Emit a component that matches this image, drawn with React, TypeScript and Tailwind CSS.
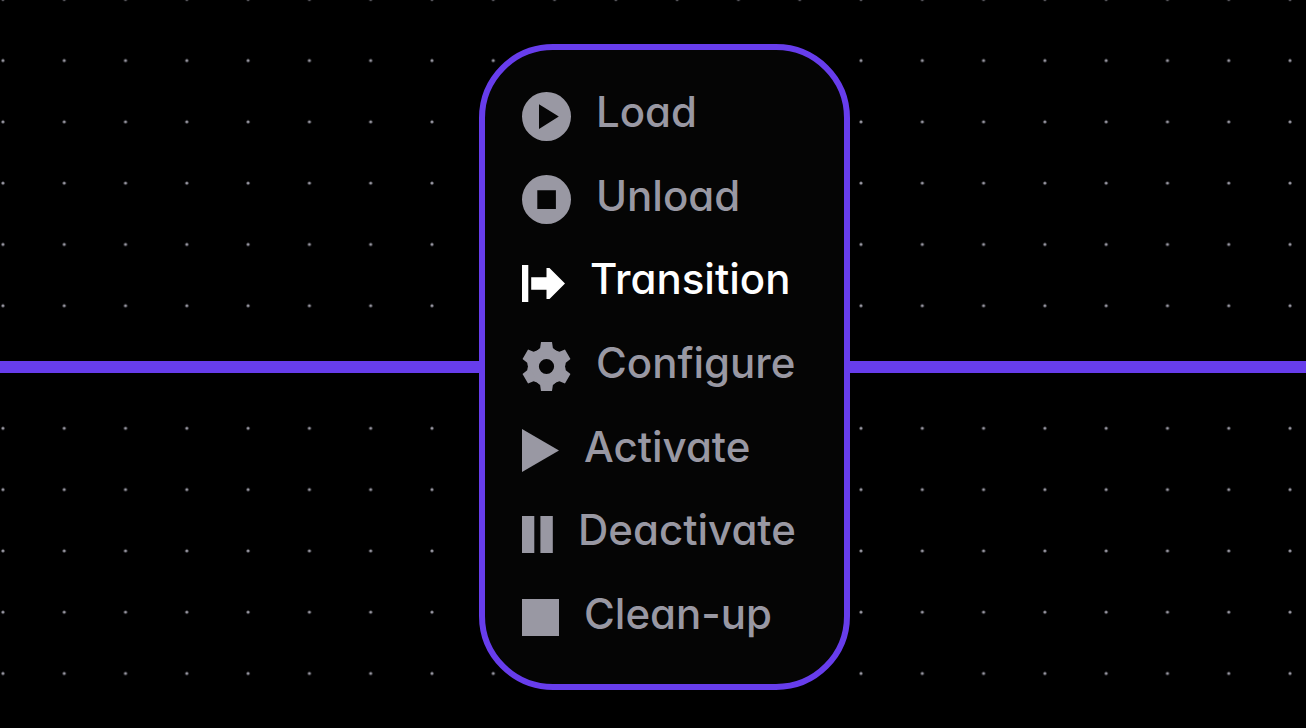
import React from "react";

function LoadIcon() {
  return (
    <svg className="h-[49px] w-[49px] shrink-0" viewBox="0 0 49 49" fill="currentColor" aria-hidden="true">
      <path fillRule="evenodd" d="M24.5 0a24.5 24.5 0 1 1 0 49a24.5 24.5 0 0 1 0-49ZM17 12.3V36.9L36.8 24.6Z" />
    </svg>
  );
}

function UnloadIcon() {
  return (
    <svg className="h-[49px] w-[49px] shrink-0" viewBox="0 0 49 49" fill="currentColor" aria-hidden="true">
      <path fillRule="evenodd" d="M24.5 0a24.5 24.5 0 1 1 0 49a24.5 24.5 0 0 1 0-49ZM15.3 15.3V33.9H33.9V15.3Z" />
    </svg>
  );
}

function TransitionIcon() {
  return (
    <svg className="h-[37px] w-[43px] shrink-0" viewBox="0 0 43 37" fill="currentColor" aria-hidden="true">
      <path d="M0 0H6.3V37H0ZM9.2 12.3H24.5V3.1H27.5L43 18.5L27.5 33.9H24.5V24.7H9.2Z" />
    </svg>
  );
}

const TOOTH_ANGLES = [0, 60, 120, 180, 240, 300];

function ConfigureIcon() {
  return (
    <svg className="h-[49px] w-[49px] shrink-0" viewBox="-24.5 -24.5 49 49" fill="currentColor" aria-hidden="true">
      <circle r="13" fill="none" stroke="currentColor" strokeWidth="10.8" />
      {TOOTH_ANGLES.map((angle) => (
        <path
          key={angle}
          transform={`rotate(${angle})`}
          d="M-5.5 -24.5H5.5L6.4 -18.6Q8 -17.4 10 -15.3H-10Q-8 -17.4 -6.4 -18.6Z"
        />
      ))}
    </svg>
  );
}

function ActivateIcon() {
  return (
    <svg className="h-[43px] w-[37px] shrink-0" viewBox="0 0 37 43" fill="currentColor" aria-hidden="true">
      <path d="M0 0L37 21.5L0 43Z" />
    </svg>
  );
}

function DeactivateIcon() {
  return (
    <svg className="h-[37px] w-[31px] shrink-0" viewBox="0 0 31 37" fill="currentColor" aria-hidden="true">
      <path d="M0 0H12.3V37H0ZM18.4 0H30.8V37H18.4Z" />
    </svg>
  );
}

function CleanUpIcon() {
  return (
    <svg className="h-[37px] w-[37px] shrink-0" viewBox="0 0 37 37" fill="currentColor" aria-hidden="true">
      <path d="M0 0H37V37H0Z" />
    </svg>
  );
}

const ACTIONS: { label: string; Icon: () => React.ReactElement; active?: boolean }[] = [
  { label: "Load", Icon: LoadIcon },
  { label: "Unload", Icon: UnloadIcon },
  { label: "Transition", Icon: TransitionIcon, active: true },
  { label: "Configure", Icon: ConfigureIcon },
  { label: "Activate", Icon: ActivateIcon },
  { label: "Deactivate", Icon: DeactivateIcon },
  { label: "Clean-up", Icon: CleanUpIcon },
];

function DotGrid() {
  return (
    <svg className="absolute inset-0 h-full w-full" aria-hidden="true">
      <defs>
        <pattern id="dots" x="-27.7" y="29.9" width="61.29" height="61.29" patternUnits="userSpaceOnUse">
          <circle cx="30.65" cy="30.65" r="1.6" fill="#9998a3" />
        </pattern>
      </defs>
      <rect width="100%" height="100%" fill="url(#dots)" />
    </svg>
  );
}

export default function App() {
  return (
    <main className="relative min-h-screen overflow-hidden bg-black pt-11 font-['Inter','Liberation_Sans',sans-serif]">
      <DotGrid />
      <div className="relative flex items-center">
        <div className="h-3 flex-[479] bg-[#673dec]" />
        <nav
          aria-label="Lifecycle actions"
          className="flex min-h-[646px] w-[371px] shrink-0 rounded-[74px] border-6 border-[#673dec] bg-[#050505] py-[42px] pl-[37px]"
        >
          <ul className="flex flex-col justify-between">
            {ACTIONS.map(({ label, Icon, active }) => (
              <li key={label} className="h-12">
                <button
                  type="button"
                  aria-current={active ? "true" : undefined}
                  className={`flex h-12 items-center gap-[25px] ${active ? "text-white" : "text-[#9998a3]"}`}
                >
                  <Icon />
                  <span className="pb-2 text-[42px] leading-[48px] font-medium whitespace-nowrap [font-feature-settings:'cv11']">
                    {label}
                  </span>
                </button>
              </li>
            ))}
          </ul>
        </nav>
        <div className="h-3 flex-[456] bg-[#673dec]" />
      </div>
    </main>
  );
}
